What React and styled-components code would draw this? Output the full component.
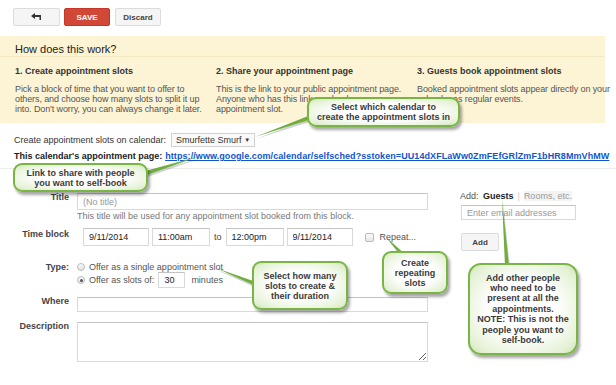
import React from 'react';
import styled, { createGlobalStyle, css } from 'styled-components';

const GlobalStyle = createGlobalStyle`
  body {
    margin: 0;
    overflow: hidden;
    background: #fff;
    font-family: "Liberation Sans", Arial, sans-serif;
    font-size: 9px;
    color: #222;
  }
`;

const Page = styled.div`
  position: relative;
  width: 616px;
  height: 385px;
  overflow: hidden;
`;

const Toolbar = styled.div`
  display: flex;
  gap: 4px;
  padding: 8px 0 0 13px;
`;

const ToolButton = styled.button`
  display: flex;
  align-items: center;
  justify-content: center;
  width: ${({ $w }) => $w || 46}px;
  height: 18px;
  padding: 0;
  border: 1px solid #dcdcdc;
  border-radius: 2px;
  background: #f5f5f5;
  color: #444;
  font-family: inherit;
  font-size: 8px;
  font-weight: bold;

  ${({ $primary }) =>
    $primary &&
    css`
      background: #d14836;
      border-color: #c53727;
      color: #fff;
    `}
`;

const HelpPanel = styled.div`
  margin-top: 10px;
  width: 605px;
  background: #fcf4d5;
  padding-bottom: 9px;
`;

const HelpTitle = styled.div`
  padding: 6px 15px 0;
  font-size: 11px;
  line-height: 14px;
  color: #222;
  border-bottom: 1px solid #f3e8bf;
`;

const Steps = styled.div`
  display: grid;
  grid-template-columns: 201px 201px 188px;
  padding: 9px 0 0 15px;
`;

const StepTitle = styled.div`
  font-weight: bold;
  line-height: 10px;
  color: #333;
`;

const StepText = styled.div`
  margin-top: 8px;
  line-height: 10px;
  color: #555;
  white-space: nowrap;
  letter-spacing: -0.1px;
`;

const CalendarRow = styled.div`
  display: flex;
  align-items: center;
  gap: 5px;
  height: 14px;
  margin: 10px 0 0 14px;
  color: #333;
`;

const Select = styled.div`
  display: flex;
  align-items: center;
  justify-content: space-between;
  box-sizing: border-box;
  width: 84px;
  height: 14px;
  padding: 0 4px;
  border: 1px solid #d0d0d0;
  background: #fafafa;
  color: #333;

  span:last-child {
    font-size: 6px;
  }
`;

const LinkRow = styled.div`
  display: flex;
  gap: 3px;
  margin: 2px 0 0 14px;
  line-height: 14px;
  font-weight: bold;
  color: #222;
  white-space: nowrap;

  a {
    color: #1155cc;
    text-decoration: underline;
    letter-spacing: 0.08px;
  }
`;

const Divider = styled.div`
  height: 1px;
  margin-top: 5px;
  background: #ececec;
`;

const FormArea = styled.div`
  display: flex;
  padding-top: 22px;
`;

const MainForm = styled.div`
  width: 428px;
  padding-top: 2px;
`;

const FieldRow = styled.div`
  display: flex;
  gap: 8px;
  margin-top: ${({ $mt }) => $mt || 0}px;
`;

const Label = styled.div`
  flex: 0 0 69px;
  text-align: right;
  font-weight: bold;
  color: #444;
  line-height: ${({ $lh }) => $lh || 9}px;
`;

const Field = styled.div`
  flex: 1;
`;

const TextBox = styled.input`
  display: block;
  box-sizing: border-box;
  width: ${({ $w }) => ($w ? `${$w}px` : '100%')};
  height: ${({ $h }) => $h || 17}px;
  margin: 0;
  padding: 0 5px;
  border: 1px solid #d9d9d9;
  border-top-color: #c4c4c4;
  border-radius: 0;
  background: #fff;
  font-family: inherit;
  font-size: 9px;
  color: #222;
  outline: none;

  &::placeholder {
    color: #999;
  }
`;

const TextArea = styled.textarea`
  display: block;
  box-sizing: border-box;
  width: 100%;
  height: 40px;
  margin: 0;
  border: 1px solid #d9d9d9;
  border-top-color: #c4c4c4;
  font-family: inherit;
  font-size: 9px;
`;

const Hint = styled.div`
  margin-top: 1px;
  line-height: 10px;
  color: #777;
`;

const TimeRow = styled.div`
  display: flex;
  align-items: center;
  gap: 3px;
  margin-left: 6px;
  color: #444;
`;

const ToWord = styled.span`
  margin: 0 1px;
`;

const Check = styled.span`
  display: inline-block;
  box-sizing: border-box;
  width: 9px;
  height: 9px;
  margin: 0 3px 0 9px;
  border: 1px solid #bbb;
  border-radius: 2px;
  background: linear-gradient(#fafafa, #e6e6e6);
`;

const RepeatLabel = styled.span`
  color: #555;
`;

const OptionLine = styled.div`
  display: flex;
  align-items: center;
  gap: 4px;
  height: ${({ $h }) => $h || 10}px;
  color: #555;
`;

const Radio = styled.span`
  position: relative;
  box-sizing: border-box;
  width: 8px;
  height: 8px;
  border: 1px solid #bbb;
  border-radius: 50%;
  background: linear-gradient(#fafafa, #e2e2e2);

  ${({ $checked }) =>
    $checked &&
    css`
      &:after {
        content: '';
        position: absolute;
        left: 1.5px;
        top: 1.5px;
        width: 3px;
        height: 3px;
        border-radius: 50%;
        background: #555;
      }
    `}
`;

const GuestPanel = styled.div`
  margin-left: 32px;
  width: 120px;
`;

const AddLine = styled.div`
  line-height: 10px;
  color: #555;
  white-space: nowrap;

  b {
    color: #222;
    margin-left: 2px;
  }
`;

const Sep = styled.span`
  color: #ccc;
  margin: 0 4px;
`;

const Muted = styled.span`
  color: #9a9a9a;
  background: #f3f3f3;
`;

const AddButton = styled(ToolButton)`
  width: 38px;
  margin: 13px 0 0 1px;
`;

const Callout = styled.div`
  position: absolute;
  left: ${({ $x }) => $x}px;
  top: ${({ $y }) => $y}px;
  width: ${({ $w }) => $w}px;
  height: ${({ $h }) => $h}px;
  box-sizing: border-box;
  display: flex;
  align-items: center;
  justify-content: center;
  text-align: center;
  border: 2px solid #79b545;
  border-radius: ${({ $r }) => $r || 9}px;
  background: radial-gradient(ellipse at center, #ffffff 45%, #e4f1d5 85%, #c9e3ad 100%);
  box-shadow: 2px 3px 3px rgba(0, 0, 0, 0.35);
  font-weight: bold;
  font-size: 9px;
  line-height: ${({ $lh }) => $lh || 10}px;
  color: #3a3a3a;
  z-index: 2;
`;

const Pointers = styled.svg`
  position: absolute;
  left: 0;
  top: 0;
  z-index: 1;
  pointer-events: none;
`;

const wedge = ([x1, y1], [x2, y2], w) => {
  const dx = x2 - x1;
  const dy = y2 - y1;
  const len = Math.hypot(dx, dy);
  const nx = (-dy / len) * (w / 2);
  const ny = (dx / len) * (w / 2);
  return `${x1},${y1} ${x2 + nx},${y2 + ny} ${x2 - nx},${y2 - ny}`;
};

const pointers = [
  [[255, 137], [314, 116]],
  [[200, 156], [146, 173]],
  [[216, 268], [256, 284]],
  [[386, 237], [403, 255]],
  [[502, 199], [507, 266]],
];

const BackIcon = () => (
  <svg width="11" height="8" viewBox="0 0 11 8">
    <path d="M0 3 L4 0 V2 H10 V7 H8.5 V4 H4 V6 Z" fill="#333" />
  </svg>
);

const App = () => {
  return (
    <Page>
      <GlobalStyle />
      <Toolbar>
        <ToolButton $w={47}>
          <BackIcon />
        </ToolButton>
        <ToolButton $primary>SAVE</ToolButton>
        <ToolButton style={{ marginLeft: 1 }}>Discard</ToolButton>
      </Toolbar>

      <HelpPanel>
        <HelpTitle>How does this work?</HelpTitle>
        <Steps>
          <div>
            <StepTitle>1. Create appointment slots</StepTitle>
            <StepText>
              Pick a block of time that you want to offer to
              <br />
              others, and choose how many slots to split it up
              <br />
              into. Don't worry, you can always change it later.
            </StepText>
          </div>
          <div>
            <StepTitle>2. Share your appointment page</StepTitle>
            <StepText>
              This is the link to your public appointment page.
              <br />
              Anyone who has this link can book an
              <br />
              appointment slot.
            </StepText>
          </div>
          <div>
            <StepTitle>3. Guests book appointment slots</StepTitle>
            <StepText>
              Booked appointment slots appear directly on your
              <br />
              calendar as regular events.
            </StepText>
          </div>
        </Steps>
      </HelpPanel>

      <CalendarRow>
        <span>Create appointment slots on calendar:</span>
        <Select>
          <span>Smurfette Smurf</span>
          <span>▼</span>
        </Select>
      </CalendarRow>
      <LinkRow>
        <span>This calendar's appointment page:</span>
        <a>https://www.google.com/calendar/selfsched?sstoken=UU14dXFLaWw0ZmFEfGRlZmF1bHR8MmVhMW</a>
      </LinkRow>
      <Divider />

      <FormArea>
        <MainForm>
          <FieldRow>
            <Label>Title</Label>
            <Field>
              <TextBox placeholder="(No title)" />
              <Hint>This title will be used for any appointment slot booked from this block.</Hint>
            </Field>
          </FieldRow>

          <FieldRow $mt={7}>
            <Label $lh={12}>Time block</Label>
            <Field>
              <TimeRow>
                <TextBox $w={66} $h={18} defaultValue="9/11/2014" />
                <TextBox $w={58} $h={18} defaultValue="11:00am" />
                <ToWord>to</ToWord>
                <TextBox $w={58} $h={18} defaultValue="12:00pm" />
                <TextBox $w={66} $h={18} defaultValue="9/11/2014" />
                <Check />
                <RepeatLabel>Repeat...</RepeatLabel>
              </TimeRow>
            </Field>
          </FieldRow>

          <FieldRow $mt={16}>
            <Label $lh={10}>Type:</Label>
            <Field>
              <OptionLine>
                <Radio />
                <span>Offer as a single appointment slot</span>
              </OptionLine>
              <OptionLine $h={16}>
                <Radio $checked />
                <span>Offer as slots of:</span>
                <TextBox $w={27} $h={16} defaultValue="30" />
                <span style={{ marginLeft: 2 }}>minutes</span>
              </OptionLine>
            </Field>
          </FieldRow>

          <FieldRow $mt={9}>
            <Label>Where</Label>
            <Field>
              <TextBox $h={15} />
            </Field>
          </FieldRow>

          <FieldRow $mt={10}>
            <Label>Description</Label>
            <Field>
              <TextArea />
            </Field>
          </FieldRow>
        </MainForm>

        <GuestPanel>
          <AddLine>
            Add: <b>Guests</b>
            <Sep>|</Sep>
            <Muted>Rooms, etc.</Muted>
          </AddLine>
          <TextBox $w={115} $h={15} placeholder="Enter email addresses" style={{ marginTop: 4, marginLeft: 1 }} />
          <AddButton>Add</AddButton>
        </GuestPanel>
      </FormArea>

      <Pointers width="616" height="385">
        {pointers.map(([a, b], i) => (
          <g key={i}>
            <polygon points={wedge([a[0] + 1, a[1] + 2], [b[0] + 1, b[1] + 2], 4)} fill="rgba(0,0,0,0.18)" />
            <polygon points={wedge(a, b, 4)} fill="#6fae3c" />
          </g>
        ))}
      </Pointers>

      <Callout $x={307} $y={97} $w={153} $h={30}>
        Select which calendar to
        <br />
        create the appointment slots in
      </Callout>
      <Callout $x={13} $y={163} $w={135} $h={29}>
        Link to share with people
        <br />
        you want to self-book
      </Callout>
      <Callout $x={252} $y={261} $w={96} $h={49}>
        Select how many
        <br />
        slots to create &amp;
        <br />
        their duration
      </Callout>
      <Callout $x={382} $y={251} $w={66} $h={43}>
        Create
        <br />
        repeating
        <br />
        slots
      </Callout>
      <Callout $x={468} $y={263} $w={110} $h={92} $r={13} $lh={10.4}>
        Add other people
        <br />
        who need to be
        <br />
        present at all the
        <br />
        appointments.
        <br />
        NOTE: This is not the
        <br />
        people you want to
        <br />
        self-book.
      </Callout>
    </Page>
  );
};

export default App;
